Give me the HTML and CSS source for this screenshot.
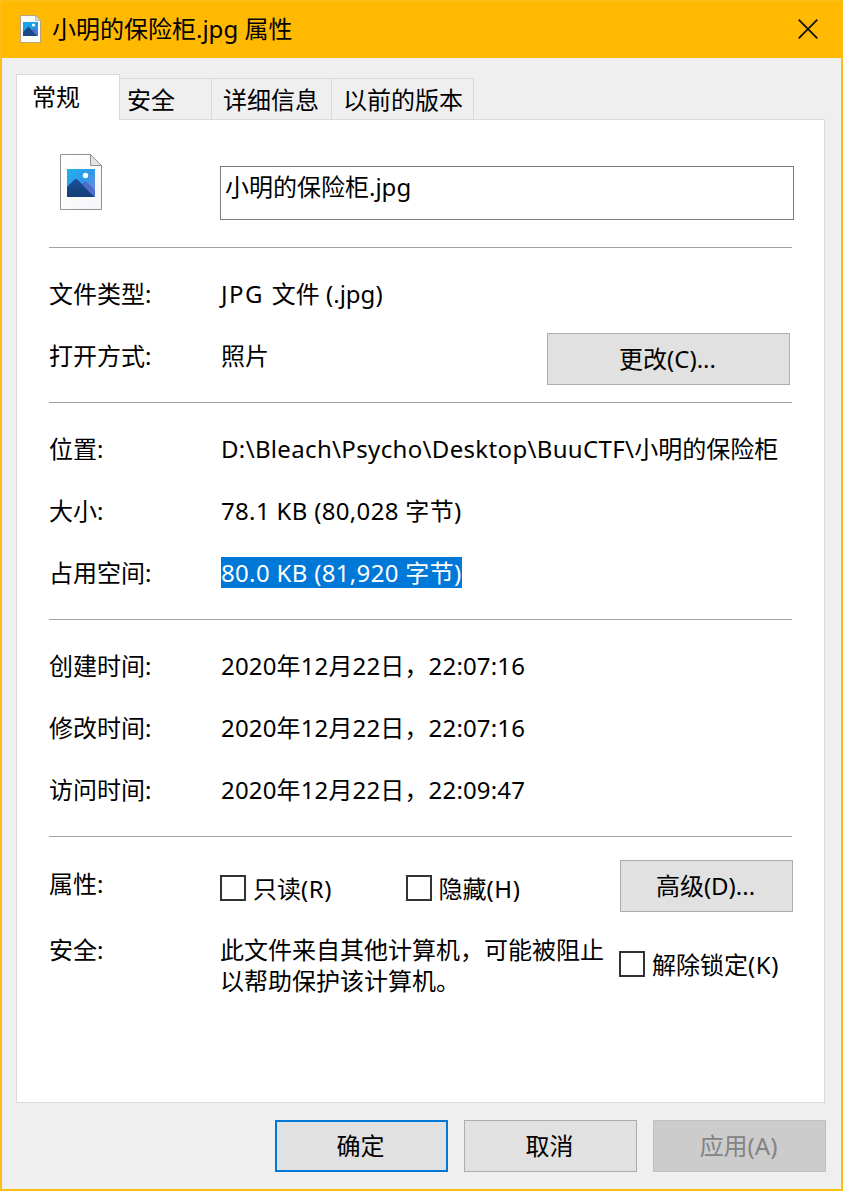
FILE: index.html
```html
<!DOCTYPE html>
<html lang="zh-CN">
<head>
<meta charset="utf-8">
<title>小明的保险柜.jpg 属性</title>
<link rel="stylesheet" href="styles.css">
</head>
<body>
<div class="window">
  <header class="titlebar">
    <svg class="title-icon" width="21" height="28" viewBox="0 0 21 28">
      <path d="M.5 .5H15.500L20.500 5.500V27.500H.5Z" fill="#fafafa" stroke="#b9a579"/>
      <path d="M15.500 .5V5.500H20.500Z" fill="#ddd" stroke="#aaa" stroke-width=".7"/>
      <path d="M3 7H18V21H3Z" fill="#1aa0e8"/>
      <path d="M11 15L14 12.500L18 16.500V21H11Z" fill="#5070cc"/>
      <path d="M3 17L8.500 11.500L17 21H3Z" fill="#164887"/>
      <circle cx="13.500" cy="10" r="1.600" fill="#fff"/>
    </svg>
    <h1 class="title">小明的保险柜.jpg 属性</h1>
    <svg class="close" width="20" height="20" viewBox="0 0 20 20"><path d="M.7 .7L19.300 19.300M19.300 .7L.7 19.300" stroke="#111" stroke-width="1.800"/></svg>
  </header>
  <nav class="tabs">
    <div class="tab active">常规</div>
    <div class="tab tab-security">安全</div>
    <div class="tab tab-details">详细信息</div>
    <div class="tab tab-versions">以前的版本</div>
  </nav>
  <main class="page">
    <section class="head">
      <svg class="file-icon" width="42" height="56" viewBox="0 0 42 56">
        <defs>
          <linearGradient id="paper" x2="1" y2="1"><stop stop-color="#fff"/><stop offset="1" stop-color="#f5f6f8"/></linearGradient>
          <linearGradient id="sky" x2="1" y2="1"><stop stop-color="#20b2ee"/><stop offset=".5" stop-color="#3199e8"/><stop offset="1" stop-color="#8585dc"/></linearGradient>
          <linearGradient id="hill" x2="0" y2="1"><stop stop-color="#1c4f96"/><stop offset="1" stop-color="#123e77"/></linearGradient>
        </defs>
        <path d="M.5 .5H30.500L41.500 11.500V55.500H.5Z" fill="url(#paper)" stroke="#929292"/>
        <path d="M30.500 .5V11.500H41.500Z" fill="#e3e3e3" stroke="#929292"/>
        <path d="M7 15H35V43H7Z" fill="url(#sky)"/>
        <path d="M20 31L24.500 28Q26 27 27.500 28.500L35 36V43H24Z" fill="#4f6cc8"/>
        <path d="M7 33L14 26Q16 24 18 26L34 43H7Z" fill="url(#hill)"/>
        <circle cx="25.500" cy="21.500" r="2.700" fill="#fff"/>
      </svg>
      <div class="filename">小明的保险柜.jpg</div>
    </section>
    <section class="group">
      <div class="row"><span class="label">文件类型:</span><span class="value"><span class="t-jpg">JPG </span>文件 (.jpg)</span></div>
      <div class="row"><span class="label">打开方式:</span><span class="value">照片</span><button class="btn change">更改(C)...</button></div>
    </section>
    <section class="group">
      <div class="row"><span class="label">位置:</span><span class="value"><span class="t-path">D:\Bleach\Psycho\Desktop\BuuCTF\</span>小明的保险柜</span></div>
      <div class="row"><span class="label">大小:</span><span class="value t-size">78.1 KB (80,028 字节)</span></div>
      <div class="row"><span class="label">占用空间:</span><span class="value t-size selected">80.0 KB (81,920 字节)</span></div>
    </section>
    <section class="group">
      <div class="row"><span class="label">创建时间:</span><span class="value t-date">2020年12月22日，22:07:16</span></div>
      <div class="row"><span class="label">修改时间:</span><span class="value t-date">2020年12月22日，22:07:16</span></div>
      <div class="row"><span class="label">访问时间:</span><span class="value t-date">2020年12月22日，22:09:47</span></div>
    </section>
    <section class="attributes">
      <span class="label">属性:</span>
      <label class="check readonly"><i class="box"></i><span>只读<span class="key">(R)</span></span></label>
      <label class="check hidden-attr"><i class="box"></i><span>隐藏<span class="key">(H)</span></span></label>
      <button class="btn advanced">高级(D)...</button>
    </section>
    <section class="security">
      <span class="label">安全:</span>
      <p class="notice">此文件来自其他计算机，可能被阻止<br>以帮助保护该计算机。</p>
      <label class="check unblock"><i class="box"></i><span>解除锁定<span class="key">(K)</span></span></label>
    </section>
  </main>
  <footer class="actions">
    <button class="btn primary">确定</button>
    <button class="btn">取消</button>
    <button class="btn disabled" disabled>应用(A)</button>
  </footer>
</div>
</body>
</html>
```
FILE: styles.css
```css
* { box-sizing: border-box; }
body { margin: 0; }
svg { flex: none; }
.window {
  width: 843px;
  height: 1191px;
  border: 2px solid #fdbe14;
  background: #efefef;
  color: #000;
  font: 24px/31px "Noto Sans", "Noto Sans CJK SC", sans-serif;
  display: flex;
  flex-direction: column;
  white-space: nowrap;
}
.titlebar {
  height: 56px;
  flex: none;
  background: #ffb900;
  display: flex;
  align-items: center;
  padding: 0 23px 2px 18px;
}
.title { margin: -1px auto 0 11px; font: inherit; }
.tabs {
  display: flex;
  align-items: flex-end;
  height: 62px;
  flex: none;
  padding: 0 14px;
}
.tab {
  height: 42px;
  border: 1px solid #d9d9d9;
  border-width: 1px 1px 0 0;
  padding-top: 5px;
}
.tab.active {
  width: 104px;
  height: 46px;
  border-left-width: 1px;
  background: #fff;
  padding: 6px 0 0 15px;
  position: relative;
}
.tab-security { width: 92px; padding-left: 7px; }
.tab-details { width: 120px; padding-left: 11px; }
.tab-versions { width: 142px; padding-left: 11px; }
.page {
  width: 809px;
  height: 984px;
  flex: none;
  margin: -1px 0 0 14px;
  border: 1px solid #d9d9d9;
  background: #fff;
  padding: 0 32px;
}
.head {
  height: 128px;
  border-bottom: 1px solid #a0a0a0;
  display: flex;
  padding: 34px 0 0 11px;
}
.filename {
  width: 574px;
  height: 54px;
  flex: none;
  margin: 12px 0 0 118px;
  border: 1px solid #7a7a7a;
  padding: 4px;
}
.group {
  padding: 14px 0 16px;
  border-bottom: 1px solid #a0a0a0;
}
.row { height: 62px; display: flex; align-items: center; }
.label { width: 172px; flex: none; }
.t-jpg { letter-spacing: 1.5px; }
.t-path { letter-spacing: .34px; }
.t-size { letter-spacing: .33px; }
.t-date { letter-spacing: .15px; }
.key { letter-spacing: .6px; }
.btn {
  width: 173px;
  height: 52px;
  flex: none;
  border: 1px solid #adadad;
  background: #e1e1e1;
  color: #000;
  font: inherit;
  padding: 0 2px 1px 0;
}
.change { width: 243px; margin: 8px 2px 0 auto; }
.selected { background: #0078d7; color: #fff; }
.attributes {
  height: 90px;
  display: flex;
  align-items: flex-start;
  padding-top: 23px;
}
.attributes .label { margin-top: 8px; width: 171px; }
.check { display: flex; align-items: center; gap: 7px; }
.check > span { padding-top: 2px; }
.box { width: 26px; height: 26px; border: 2px solid #333; flex: none; }
.readonly { height: 31px; margin-top: 12px; width: 186px; }
.hidden-attr { height: 31px; margin-top: 12px; width: 214px; }
.advanced { margin-right: -1px; margin-left: 1px; }
.security { display: flex; padding-top: 7px; }
.security .label { width: 171px; }
.notice { margin: 0; width: 399px; }
.unblock { height: 31px; margin-top: 14px; }
.actions {
  display: flex;
  justify-content: flex-end;
  gap: 16px;
  padding: 17px 15px 0;
}
.primary { border: 2px solid #0078d7; }
.disabled { background: #ccc; border-color: #bfbfbf; color: #838383; }
```
